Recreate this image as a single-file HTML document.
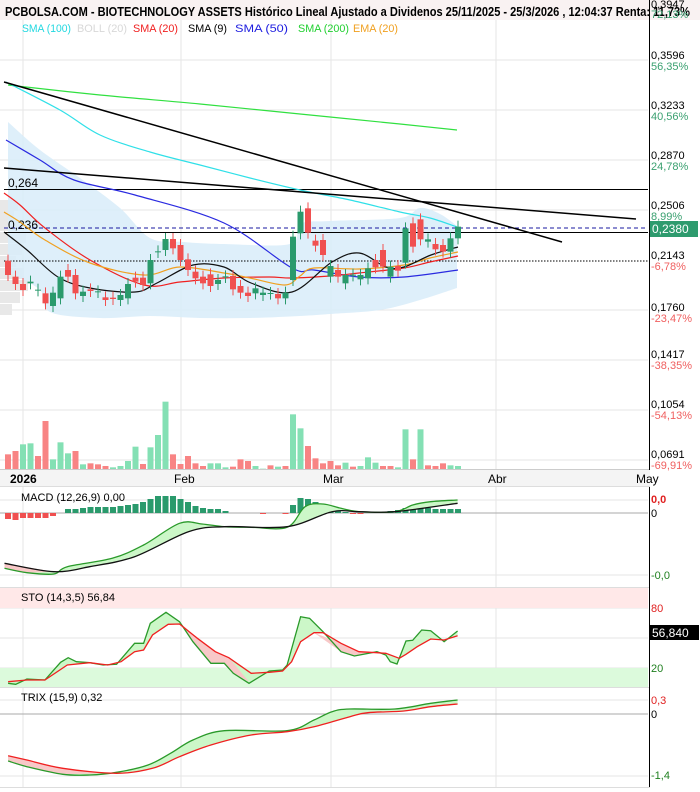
<!DOCTYPE html>
<html><head><meta charset="utf-8"><style>
html,body{margin:0;padding:0;background:#fff}
svg{display:block;font-family:"Liberation Sans",sans-serif}
</style></head><body>
<svg id="s" width="700" height="792" xmlns="http://www.w3.org/2000/svg">
<rect width="700" height="792" fill="#fff"/>
<rect x="0" y="0" width="700" height="20" fill="#f9f2f2"/>
<g id="grid" stroke="#e6e6e6" stroke-width="1"></g>
<rect x="0" y="588" width="648" height="20" fill="#ffe8e8"/>
<rect x="0" y="668" width="648" height="19" fill="#dcfadc"/>
<g id="g"></g>
<text x="5" y="16" font-size="12.5" font-weight="bold" textLength="685" lengthAdjust="spacingAndGlyphs">PCBOLSA.COM - BIOTECHNOLOGY ASSETS Histórico Lineal Ajustado a Dividenos 25/11/2025 - 25/3/2026 , 12:04:37 Renta: 11,73%</text>
<g font-size="11">
<text x="22" y="32" fill="#22d8e0" textLength="49" lengthAdjust="spacingAndGlyphs">SMA (100)</text>
<text x="77" y="32" fill="#d8d8d8" textLength="50" lengthAdjust="spacingAndGlyphs">BOLL (20)</text>
<text x="133" y="32" fill="#f02020" textLength="45" lengthAdjust="spacingAndGlyphs">SMA (20)</text>
<text x="188" y="32" fill="#000" textLength="39" lengthAdjust="spacingAndGlyphs">SMA (9)</text>
<text x="235" y="32" fill="#2020e0" textLength="53" lengthAdjust="spacingAndGlyphs">SMA (50)</text>
<text x="298" y="32" fill="#20d030" textLength="51" lengthAdjust="spacingAndGlyphs">SMA (200)</text>
<text x="353" y="32" fill="#f0a020" textLength="45" lengthAdjust="spacingAndGlyphs">EMA (20)</text>
</g>
<g font-size="11">
<text x="651" y="59">0,3596</text><text x="651" y="70" fill="#3aa070">56,35%</text>
<text x="651" y="109">0,3233</text><text x="651" y="120" fill="#3aa070">40,56%</text>
<text x="651" y="159">0,2870</text><text x="651" y="170" fill="#3aa070">24,78%</text>
<text x="651" y="209">0,2506</text><text x="651" y="220" fill="#3aa070">8,99%</text>
<text x="651" y="259">0,2143</text><text x="651" y="270" fill="#f06060">-6,78%</text>
<text x="651" y="311">0,1760</text><text x="651" y="322" fill="#f06060">-23,47%</text>
<text x="651" y="358">0,1417</text><text x="651" y="369" fill="#f06060">-38,35%</text>
<text x="651" y="408">0,1054</text><text x="651" y="419" fill="#f06060">-54,13%</text>
<text x="651" y="458">0,0691</text><text x="651" y="469" fill="#f06060">-69,91%</text>
<text x="651" y="8">0,3947</text><text x="651" y="18" fill="#3aa070">72,13%</text>
<rect x="649" y="221" width="49" height="16" fill="#2e9b6e"/>
<text x="652" y="233" fill="#fff" font-size="12">0,2380</text>
<text x="651" y="503" fill="#e02020" font-weight="bold">0,0</text>
<text x="651" y="517">0</text>
<text x="651" y="579" fill="#208020">-0,0</text>
<text x="651" y="612" fill="#e02020">80</text>
<rect x="649" y="625" width="50" height="15" fill="#000"/>
<text x="652" y="637" fill="#fff" font-size="12">56,840</text>
<text x="651" y="672" fill="#208020">20</text>
<text x="651" y="704" fill="#e02020">0,3</text>
<text x="651" y="718">0</text>
<text x="651" y="779" fill="#208020">-1,4</text>
</g>
<rect x="0" y="470" width="650" height="16" fill="#f4f4f4"/>
<g font-size="12">
<text x="10" y="483" font-weight="bold">2026</text>
<text x="174" y="483">Feb</text>
<text x="323" y="483">Mar</text>
<text x="488" y="483">Abr</text>
<text x="636" y="483">May</text>
</g>
<g font-size="11">
<text x="21" y="501">MACD (12,26,9)   0,00</text>
<text x="21" y="601">STO (14,3,5)   56,84</text>
<text x="21" y="701">TRIX (15,9)   0,32</text>
</g>
<line x1="649.5" y1="0" x2="649.5" y2="470" stroke="#000"/>
<line x1="649.5" y1="487" x2="649.5" y2="787" stroke="#000"/>
</svg>
<script>
var NS="http://www.w3.org/2000/svg",G=document.getElementById('g'),GR=document.getElementById('grid');
function el(t,a,p){var e=document.createElementNS(NS,t);for(var k in a)e.setAttribute(k,a[k]);(p||G).appendChild(e);return e;}
function cv(a,oy){return a.map(function(p){return [p[0]/2.229,oy+p[1]/3];});}
function P(a,oy){return cv(a,oy).map(function(p){return p[0].toFixed(1)+','+p[1].toFixed(1)}).join(' ');}
function R(a){return a.map(function(p){return p[0]+','+p[1]}).join(' ');}
function sm(p,start){var d=start?'M'+p[0][0].toFixed(1)+','+p[0][1].toFixed(1):'L'+p[0][0].toFixed(1)+','+p[0][1].toFixed(1);
for(var i=0;i<p.length-1;i++){var p0=p[i-1]||p[i],p1=p[i],p2=p[i+1],p3=p[i+2]||p2;
var c1=[p1[0]+(p2[0]-p0[0])/6,p1[1]+(p2[1]-p0[1])/6],c2=[p2[0]-(p3[0]-p1[0])/6,p2[1]-(p3[1]-p1[1])/6];
d+=' C'+c1[0].toFixed(1)+','+c1[1].toFixed(1)+' '+c2[0].toFixed(1)+','+c2[1].toFixed(1)+' '+p2[0].toFixed(1)+','+p2[1].toFixed(1);}return d;}
// grid
[23,181,331,496].forEach(function(x){el('line',{x1:x,y1:20,x2:x,y2:787},GR);});
[60,110,160,210,310,360,410,460].forEach(function(y){el('line',{x1:0,y1:y,x2:648,y2:y},GR);});
[500,575,608,638,668,700,776].forEach(function(y){el('line',{x1:0,y1:y,x2:648,y2:y},GR);});
el('line',{x1:0,y1:469.5,x2:650,y2:469.5,stroke:'#ccc'},GR);
el('line',{x1:0,y1:486.5,x2:650,y2:486.5,stroke:'#ddd'},GR);
el('line',{x1:0,y1:587.5,x2:650,y2:587.5,stroke:'#ddd'},GR);
el('line',{x1:0,y1:687.5,x2:650,y2:687.5,stroke:'#ddd'},GR);
el('line',{x1:0,y1:787.5,x2:650,y2:787.5,stroke:'#ddd'},GR);
el('line',{x1:0,y1:513,x2:648,y2:513,stroke:'#aaa'},GR);
el('line',{x1:0,y1:714,x2:648,y2:714,stroke:'#aaa'},GR);
[[200,18],[210,14],[220,20],[232,26],[244,22],[256,16],[268,24],[280,28],[292,20],[304,12]].forEach(function(r){el('rect',{x:0,y:r[0],width:r[1],height:11,fill:'#e8e8e8'});});
// bollinger
var up=[[8,122],[40,150],[80,178],[120,208],[150,238],[183,242],[224,244],[290,244],[300,224],[330,221],[400,218],[420,208],[440,214],[457,226]];
var lo=[[457,288],[420,300],[380,310],[330,314],[300,316],[250,318],[200,318],[150,316],[100,318],[50,312],[40,290],[8,272]];
el('path',{d:sm(up,1)+' '+sm(lo,0)+'Z',fill:'#d8ecf9',opacity:0.85});
var V=[['r',193],['r',183],['g',163],['g',160],['r',198],['r',93],['g',208],['g',157],['g',190],['r',183],['g',223],['r',220],['r',223],['r',228],['g',232],['g',228],['g',213],['g',170],['r',222],['g',172],['g',135],['g',35],['r',193],['r',222],['r',198],['r',220],['r',228],['g',220],['g',220],['g',232],['r',230],['r',208],['r',213],['g',228],['g',236],['r',226],['g',230],['r',228],['g',73],['g',115],['r',168],['r',205],['r',220],['r',213],['r',226],['g',218],['r',230],['g',228],['g',202],['g',218],['r',228],['r',228],['g',232],['g',118],['r',208],['g',118],['r',226],['r',228],['r',220],['g',226],['g',228]];
V.forEach(function(v,i){var x=8+i*7.5,y=390+v[1]/3;el('rect',{x:x-3,y:y,width:6,height:469-y,fill:v[0]=='g'?'#84e0b4':'#f88484'});});
el('line',{x1:4,y1:189.5,x2:648,y2:189.5,stroke:'#000'});
el('line',{x1:4,y1:232.5,x2:648,y2:232.5,stroke:'#000'});
el('line',{x1:4,y1:228,x2:648,y2:228,stroke:'#1a1aa0','stroke-dasharray':'4,3'});
el('line',{x1:4,y1:261,x2:648,y2:261,stroke:'#000','stroke-dasharray':'1.5,1.5'});
var t1=el('text',{x:8,y:187,'font-size':12});t1.textContent='0,264';
var t2=el('text',{x:8,y:229,'font-size':12});t2.textContent='0,236';
function pl(a,c,w){el('path',{d:sm(a,1),fill:'none',stroke:c,'stroke-width':w||1.2});}
pl([[8,85],[100,95],[200,104],[300,114],[400,124],[457,130]],'#30e040');
pl([[6,82],[60,110],[100,135],[150,152],[200,165],[250,178],[300,190],[350,200],[400,212],[430,218],[457,227]],'#30e0e8');
pl([[6,140],[40,160],[74,180],[135,195],[224,223],[292,268],[314,270],[359,277],[404,277],[458,270]],'#2a2ae0');
pl([[4,193],[20,205],[45,228],[90,260],[144,285],[180,282],[224,278],[269,277],[292,278],[330,276],[359,273],[404,268],[430,262],[458,256]],'#f02020');
pl([[4,212],[20,222],[45,240],[90,263],[144,275],[180,267],[224,273],[250,278],[285,285],[300,276],[314,268],[359,269],[404,265],[430,258],[458,252]],'#f0a020');
pl([[4,232],[27,250],[58,277],[90,288],[135,292],[157,283],[193,265],[224,267],[251,283],[292,292],[332,262],[359,253],[386,267],[404,267],[431,255],[458,247]],'#111');
el('line',{x1:4,y1:82,x2:562,y2:242,stroke:'#000','stroke-width':1.5});
el('line',{x1:4,y1:168,x2:636,y2:219,stroke:'#000','stroke-width':1.5});
var C=[['r',242,285],['r',290,312],['r',312,330],['g',305,310],['g',329,331],['r',340,370],['g',338,378],['g',290,355],['r',270,290],['r',285,340],['g',335,348],['r',328,333],['g',334,336],['r',352,360],['r',353,357],['g',345,360],['g',312,355],['r',293,305],['r',293,315],['g',240,310],['g',214,216],['g',177,210],['r',177,205],['r',195,240],['r',238,270],['r',275,295],['r',290,310],['r',283,318],['g',300,312],['g',289,291],['r',288,328],['r',318,338],['r',338,348],['g',325,340],['g',338,345],['g',339,341],['r',342,355],['g',338,355],['g',170,300],['g',95,160],['r',85,158],['r',182,197],['r',180,225],['g',258,290],['r',270,290],['g',285,310],['g',284,286],['g',285,298],['g',265,295],['r',240,262],['r',210,260],['g',260,290],['r',258,272],['g',145,248],['r',130,200],['r',118,178],['g',178,185],['r',192,208],['r',195,215],['g',175,215],['g',140,175]];
C.forEach(function(c,i){var x=8+i*7.5,t=180+c[1]/3,b=180+c[2]/3,col=c[0]=='g'?'#2a9a6c':'#f05050';
el('line',{x1:x,y1:t-6,x2:x,y2:b+6,stroke:col});el('rect',{x:x-3,y:t,width:6,height:Math.max(1,b-t),fill:col});});
var H=[-6,-7,-5,-5,-5,-5,-3,0,4,4,5,6,6,6,6,7,8,9,11,14,17,17,17,14,11,7,5,4,4,2,0,0,0,0,-1,0,0,-1,8,15,14,11,7,4,2,1,-1,-1,0,0,0,2,3,5,5,5,5,4,4,4,4];
H.forEach(function(h,i){var x=8+i*7.5;if(h==0)return;el('rect',{x:x-3,y:h>0?513-h:513,width:6,height:Math.abs(h),fill:h>0?'#2a9a6c':'#f05050'});});
function fillpair(a,b,oy,fc){el('path',{d:sm(cv(a,oy),1)+' '+sm(cv(b.slice().reverse(),oy),0)+'Z',fill:fc,stroke:'none'});}
function fillraw(a,oy,fc){el('polygon',{points:P(a,oy),fill:fc});}
function line(a,oy,c){el('path',{d:sm(cv(a,oy),1),fill:'none',stroke:c,'stroke-width':1.3});}
var mg=[[10,535],[60,548],[120,552],[150,530],[250,505],[320,465],[400,400],[450,402],[500,410],[560,412],[640,412],[680,350],[720,342],[760,355],[800,365],[880,365],[920,345],[960,335],[1020,330]];
var mb=[[10,520],[120,545],[200,530],[300,500],[420,425],[500,410],[640,410],[740,365],[800,365],[880,365],[1020,340]];
fillpair(mg,mb,390,'#ccf7c8');
fillraw([[10,520],[120,545],[60,548],[10,535]],390,'#f8c8c8');
line(mg,390,'#2a9a2a');line(mb,390,'#111');
var k=[[18,295],[35,298],[60,282],[100,285],[135,232],[152,218],[170,230],[200,233],[230,240],[260,238],[300,175],[320,175],[335,115],[370,82],[400,110],[430,170],[470,235],[500,235],[520,265],[555,295],[600,258],[630,255],[640,240],[670,95],[690,100],[720,140],[760,200],[790,213],[840,200],[860,210],[870,230],[885,237],[905,168],[920,166],[940,135],[960,137],[990,170],[1020,138]];
var d=[[18,290],[60,285],[100,285],[150,240],[200,233],[240,240],[270,230],[300,200],[320,195],[340,150],[375,118],[400,117],[440,160],[480,200],[510,218],[560,265],[600,262],[630,258],[650,230],[670,170],[700,143],[720,143],[760,175],[800,200],[840,203],[860,205],[890,220],[905,208],[930,185],[960,162],[990,165],[1020,152]];
el('polygon',{points:P(k.concat(d.slice().reverse()),585),fill:'#ccf7c8'});
fillraw([[400,112],[430,170],[470,235],[500,235],[520,265],[555,290],[510,218],[480,200],[440,160]],585,'#f8c8c8');
fillraw([[700,143],[760,200],[790,213],[840,202],[800,200],[760,175]],585,'#f8c8c8');
el('polyline',{points:P(k,585),fill:'none',stroke:'#2a9a2a','stroke-width':1.3});
el('polyline',{points:P(d,585),fill:'none',stroke:'#f02020','stroke-width':1.3});
var tg=[[18,528],[60,545],[140,568],[200,570],[260,562],[330,540],[380,505],[430,465],[500,437],[640,437],[700,405],[740,380],[780,372],[880,372],[960,355],[1020,345]];
var tr=[[18,512],[60,525],[140,550],[260,565],[340,550],[400,515],[470,480],[560,450],[640,440],[700,425],[780,395],[820,383],[900,378],[960,365],[1020,357]];
fillpair(tg,tr,585,'#ccf7c8');
fillraw([[18,512],[60,525],[140,550],[240,565],[140,568],[60,545],[18,528]],585,'#f8c8c8');
line(tg,585,'#2a9a2a');line(tr,585,'#f02020');
</script>
</body></html>
